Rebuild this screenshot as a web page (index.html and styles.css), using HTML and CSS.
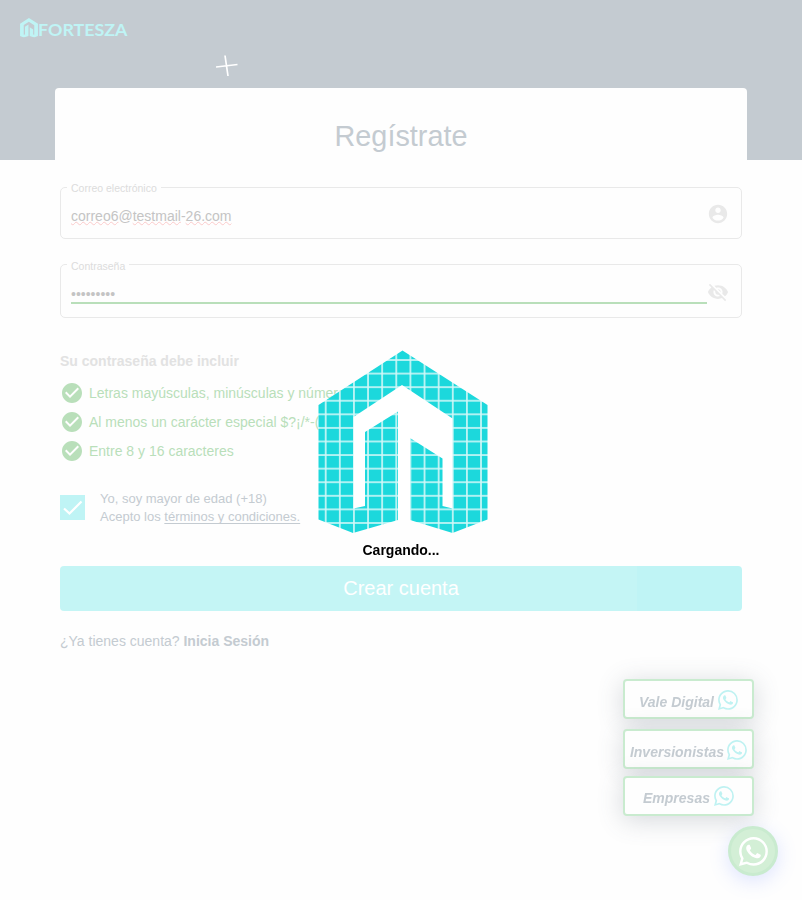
FILE: index.html
```html
<!DOCTYPE html>
<html lang="es">
<head>
<meta charset="utf-8">
<title>Fortesza</title>
<link rel="stylesheet" href="styles.css">
</head>
<body>
<svg class="defs" width="0" height="0">
  <symbol id="wa" viewBox="0 0 16 16"><path d="M13.601 2.326A7.85 7.85 0 0 0 7.994 0C3.627 0 .068 3.558.064 7.926c0 1.399.366 2.76 1.057 3.965L0 16l4.204-1.102a7.9 7.9 0 0 0 3.79.965h.004c4.368 0 7.926-3.558 7.93-7.93A7.9 7.9 0 0 0 13.6 2.326zM7.994 14.521a6.6 6.6 0 0 1-3.356-.92l-.24-.144-2.494.654.666-2.433-.156-.251a6.56 6.56 0 0 1-1.007-3.505c0-3.626 2.957-6.584 6.591-6.584a6.56 6.56 0 0 1 4.66 1.931 6.56 6.56 0 0 1 1.928 4.66c-.004 3.639-2.961 6.592-6.592 6.592m3.615-4.934c-.197-.099-1.17-.578-1.353-.646-.182-.065-.315-.099-.445.099-.133.197-.513.646-.627.775-.114.133-.232.148-.43.05-.197-.1-.836-.308-1.592-.985-.59-.525-.985-1.175-1.103-1.372-.114-.198-.011-.304.088-.403.087-.088.197-.232.296-.346.1-.114.133-.198.198-.33.065-.134.034-.248-.015-.347-.05-.099-.445-1.076-.612-1.47-.16-.389-.323-.335-.445-.34-.114-.007-.247-.007-.38-.007a.73.73 0 0 0-.529.247c-.182.198-.691.677-.691 1.654s.71 1.916.81 2.049c.098.133 1.394 2.132 3.383 2.992.47.205.84.326 1.129.418.475.152.904.129 1.246.08.38-.058 1.171-.48 1.338-.943.164-.464.164-.86.114-.943-.049-.084-.182-.133-.38-.232"/></symbol>
  <symbol id="check" viewBox="0 0 24 24"><path d="M12 2C6.480 2 2 6.480 2 12s4.480 10 10 10 10-4.480 10-10S17.520 2 12 2zm-2 15l-5-5 1.410-1.410L10 14.170l7.590-7.590L19 8l-9 9z"/></symbol>
  <symbol id="house" viewBox="318 350 170 184"><path d="M402.500 350.500L487.500 405V519.500L452.500 533L410 520V438L442.500 458.500V506L452.500 508.500V418.500L402 385L353.500 417V508.500L365 506V432L398 411.500V520L353 533L318.500 519.500V405Z"/></symbol>
</svg>
<header class="top">
  <svg class="brand" width="110" height="22" viewBox="0 0 110 22">
    <use href="#house" x="0" y="1" width="18" height="19.500"/>
    <text x="18" y="19" textLength="89.500" lengthAdjust="spacingAndGlyphs">FORTESZA</text>
  </svg>
  <svg class="spark" width="22" height="22" viewBox="0 0 22 22"><path d="M0 12L21.500 9.500M9 .5L12 21"/></svg>
</header>
<main class="card">
  <h1>Regístrate</h1>
  <div class="field email">
    <label>Correo electrónico</label>
    <div class="value"><span class="typo">correo6</span>@<span class="typo">testmail</span>-<span class="typo">26.com</span></div>
    <svg width="22" height="22" viewBox="0 0 24 24"><path d="M12 2C6.480 2 2 6.480 2 12s4.480 10 10 10 10-4.480 10-10S17.520 2 12 2zm0 3c1.660 0 3 1.340 3 3s-1.340 3-3 3-3-1.340-3-3 1.340-3 3-3zm0 14.200c-2.500 0-4.710-1.280-6-3.220.03-1.990 4-3.080 6-3.080 1.990 0 5.970 1.090 6 3.080-1.290 1.940-3.500 3.220-6 3.220z"/></svg>
  </div>
  <div class="field pass">
    <label>Contraseña</label>
    <div class="value">•••••••••</div>
    <svg width="22" height="22" viewBox="0 0 24 24"><path d="M12 7c2.760 0 5 2.240 5 5 0 .65-.13 1.260-.36 1.830l2.920 2.920c1.510-1.260 2.700-2.890 3.430-4.750-1.730-4.390-6-7.500-11-7.500-1.400 0-2.740.25-3.980.7l2.160 2.160C10.740 7.130 11.350 7 12 7zM2 4.270l2.280 2.280.46.46C3.080 8.300 1.780 10.020 1 12c1.730 4.390 6 7.500 11 7.500 1.550 0 3.030-.3 4.380-.84l.42.42L19.730 22 21 20.730 3.270 3 2 4.270zM7.530 9.800l1.550 1.550c-.05.21-.08.43-.08.65 0 1.660 1.340 3 3 3 .22 0 .44-.03.65-.08l1.550 1.550c-.67.33-1.410.53-2.200.53-2.760 0-5-2.240-5-5 0-.79.2-1.530.53-2.200zm4.310-.78l3.150 3.150.02-.16c0-1.660-1.340-3-3-3l-.17.01z"/></svg>
  </div>
  <h2>Su contraseña debe incluir</h2>
  <ul class="rules">
    <li><svg width="24" height="24"><use href="#check"/></svg>Letras mayúsculas, minúsculas y números</li>
    <li><svg width="24" height="24"><use href="#check"/></svg>Al menos un carácter especial $?¡/*-()</li>
    <li><svg width="24" height="24"><use href="#check"/></svg>Entre 8 y 16 caracteres</li>
  </ul>
  <div class="terms">
    <span class="box"><svg width="25" height="25" viewBox="0 0 25 25"><path d="M4 13.500L9.500 18.500L21.500 6.500"/></svg></span>
    <p>Yo, soy mayor de edad (+18)<br>Acepto los <u>términos y condiciones.</u></p>
  </div>
  <button class="create">Crear cuenta</button>
  <p class="login">¿Ya tienes cuenta? <b>Inicia Sesión</b></p>
</main>
<aside class="chat">
  <a class="vale">Vale Digital <svg width="20" height="20"><use href="#wa"/></svg></a>
  <a class="inv">Inversionistas <svg width="20" height="20"><use href="#wa"/></svg></a>
  <a class="emp">Empresas <svg width="20" height="20"><use href="#wa"/></svg></a>
</aside>
<div class="fab"><svg width="29" height="29"><use href="#wa"/></svg></div>
<div class="loader">
  <svg width="170" height="184" viewBox="318 350 170 184">
    <defs>
      <pattern id="tiles" x="325.700" y="360" width="14.120" height="13.580" patternUnits="userSpaceOnUse">
        <rect width="14.120" height="13.580" fill="#d2f8f8"/>
        <rect x=".8" y=".8" width="12.500" height="12" fill="#1cd8dc"/>
      </pattern>
    </defs>
    <path fill="#fff" d="M402.500 350.500L487.500 405V519.500L452.500 533L410 520H398L353 533L318.500 519.500V405Z"/>
    <use href="#house" x="318" y="350" width="170" height="184" fill="url(#tiles)"/>
  </svg>
  <strong>Cargando...</strong>
</div>
</body>
</html>
```

FILE: styles.css
```css
* { box-sizing: border-box; }
body {
  margin: 0;
  height: 900px;
  overflow: hidden;
  background: #fefefe;
  font-family: "Liberation Sans", Arial, sans-serif;
  font-size: 14px;
  color: #c4cbd1;
}
.defs { position: absolute; }
.top {
  display: flex;
  height: 160px;
  padding: 17px 0 0 20px;
  background: #c4cbd1;
}
.brand { fill: #bff4f5; flex: none; }
.brand text { font: 700 17px Lato, sans-serif; }
.spark { margin: 38px 0 0 86px; fill: none; stroke: #fff; stroke-width: 1.7; }
.card {
  width: 692px;
  margin: -72px auto 0;
  padding: 31px 5px 0;
  border-radius: 4px;
  background: #fefefe;
}
h1 {
  margin: 0 0 34px;
  text-align: center;
  font-size: 28.800px;
  line-height: 34px;
  font-weight: 400;
}
.field {
  position: relative;
  display: flex;
  padding: 0 12px 0 10px;
  border: 1px solid #e9e9e9;
  border-radius: 5px;
}
.field label {
  position: absolute;
  left: 6px;
  top: -6px;
  padding: 0 4px;
  background: #fefefe;
  color: #dcdcdc;
  font-size: 10.500px;
  line-height: 13px;
}
.field svg { flex: none; fill: #e9e9e9; }
.value { flex: 1; color: #c4c4c4; line-height: 18px; }
.email { height: 52px; padding-top: 15px; }
.email .value { margin-top: 4px; }
.email svg { margin-top: -.5px; }
.typo { text-decoration: underline wavy #fbcaca .8px; text-underline-offset: 0; text-decoration-skip-ink: none; }
.pass { height: 54px; margin-top: 25px; padding-top: 16px; }
.pass label { top: -5px; }
.pass .value { height: 23px; padding-top: 4px; border-bottom: 2px solid #b9dfba; }
h2 {
  margin: 34px 0 8px;
  color: #e2e2e2;
  font-size: 14px;
  line-height: 18px;
}
.rules { margin: 0; padding: 0; list-style: none; color: #b9dfba; }
.rules li { display: flex; align-items: center; gap: 5px; height: 29px; white-space: nowrap; }
.rules svg { fill: #b9dfba; }
.terms { display: flex; align-items: center; gap: 15px; margin-top: 25px; }
.terms p { margin: 0; font-size: 13px; line-height: 18px; }
.terms u { text-underline-offset: 2px; text-decoration-skip-ink: none; }
.box { width: 25px; height: 25px; margin-top: -1px; background: #bff4f5; }
.box svg { display: block; fill: none; stroke: #fff; stroke-width: 2.200; }
.create {
  display: block;
  width: 100%;
  height: 45px;
  margin-top: 40px;
  padding: 0;
  border: 0;
  border-radius: 4px;
  background: linear-gradient(90deg, #c4f5f5 0 84.600%, #bff4f5 84.600%);
  color: #fff;
  font: 20px "Liberation Sans", Arial, sans-serif;
}
.login { margin: 21px 0 0; line-height: 18px; }
.chat { position: fixed; left: 623px; top: 679px; width: 131px; }
.chat a {
  display: flex;
  align-items: center;
  justify-content: center;
  gap: 4px;
  height: 40px;
  border: 2px solid #c9ebcf;
  border-radius: 4px;
  background: #fefefe;
  box-shadow: 0 4px 26px rgba(80, 90, 110, .24);
  font-weight: 700;
  font-style: italic;
  line-height: 18px;
  padding-top: 5px;
  white-space: nowrap;
}
.chat .inv { margin-top: 10px; gap: 3px; }
.chat .emp { margin-top: 7px; padding-top: 3px; }
.chat svg { flex: none; margin-top: -4px; fill: #bff2f2; }
.chat .emp svg { margin-top: -3px; }
.fab {
  position: fixed;
  left: 728px;
  top: 826px;
  display: grid;
  place-items: center;
  width: 50px;
  height: 50px;
  border: 3px solid #c9ebcf;
  border-radius: 50%;
  background: #d3efd6;
  box-shadow: 0 5px 20px rgba(90, 120, 255, .2);
}
.fab svg { fill: #fff; }
.loader {
  position: fixed;
  left: 318px;
  top: 350px;
  width: 170px;
  display: flex;
  flex-direction: column;
  align-items: center;
  color: #000;
  font-size: 14px;
}
.loader strong { margin: 8px 4px 0 0; line-height: 17px; }
```
